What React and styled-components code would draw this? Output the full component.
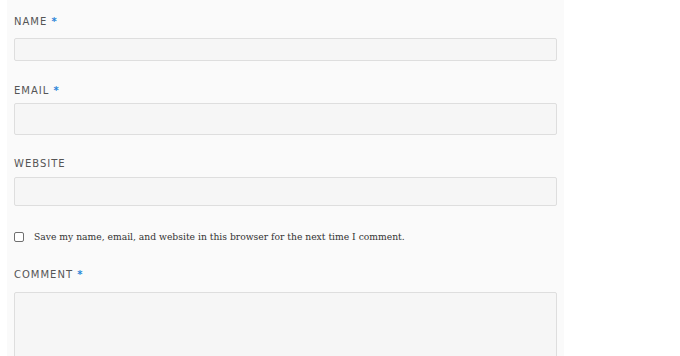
import styled, { createGlobalStyle } from "styled-components";

const GlobalStyle = createGlobalStyle`
  html, body {
    margin: 0;
    padding: 0;
    background: #ffffff;
  }
`;

const Page = styled.div`
  display: flex;
  height: 356px;
  overflow: hidden;
`;

const Panel = styled.form`
  margin-left: 7px;
  width: 557px;
  box-sizing: border-box;
  padding: 14px 7px 0;
  background: #fafafa;
  display: flex;
  flex-direction: column;
`;

const Field = styled.div`
  display: flex;
  flex-direction: column;
  margin-bottom: ${(p) => p.$after ?? 22}px;
`;

const Label = styled.label`
  font-family: "DejaVu Sans", sans-serif;
  font-size: 10px;
  line-height: 14px;
  padding-top: 1px;
  letter-spacing: 1px;
  text-transform: uppercase;
  color: #555;
  margin-bottom: ${(p) => p.$gap ?? 5}px;
`;

const Required = styled.span`
  color: #2a85d8;
  font-weight: bold;
`;

const Input = styled.input`
  box-sizing: border-box;
  width: 100%;
  height: ${(p) => p.$h}px;
  margin: 0;
  padding: 4px 8px;
  background: #f6f6f6;
  border: 1px solid #dedede;
  border-radius: 2px;
  outline: none;
`;

const TextArea = styled.textarea`
  box-sizing: border-box;
  width: 100%;
  height: 120px;
  margin: 0;
  padding: 8px;
  background: #f6f6f6;
  border: 1px solid #dedede;
  border-radius: 2px;
  resize: none;
  outline: none;
`;

const CheckRow = styled.div`
  display: flex;
  align-items: center;
  gap: 10px;
  height: 16px;
  margin-bottom: 22px;
`;

const Check = styled.input`
  appearance: none;
  width: 10px;
  height: 10px;
  margin: 0;
  border: 1px solid #6f6f6f;
  border-radius: 2px;
  background: #fff;
  flex-shrink: 0;
`;

const CheckText = styled.label`
  font-family: "DejaVu Serif", serif;
  font-size: 9.2px;
  line-height: 16px;
  color: #333;
`;

const App = () => {
  return (
    <Page>
      <GlobalStyle />
      <Panel>
        <Field>
          <Label $gap={9}>
            Name <Required>*</Required>
          </Label>
          <Input type="text" $h={23} />
        </Field>
        <Field $after={21}>
          <Label>
            Email <Required>*</Required>
          </Label>
          <Input type="email" $h={32} />
        </Field>
        <Field $after={23}>
          <Label $gap={6}>Website</Label>
          <Input type="url" $h={29} />
        </Field>
        <CheckRow>
          <Check type="checkbox" id="save" />
          <CheckText htmlFor="save">
            Save my name, email, and website in this browser for the next time I comment.
          </CheckText>
        </CheckRow>
        <Field>
          <Label $gap={10}>
            Comment <Required>*</Required>
          </Label>
          <TextArea />
        </Field>
      </Panel>
    </Page>
  );
};

export default App;
